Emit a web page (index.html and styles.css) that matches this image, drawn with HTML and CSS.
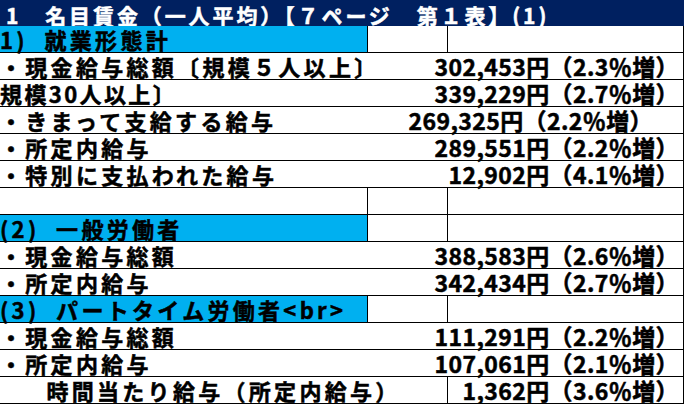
FILE: index.html
```html
<!DOCTYPE html>
<html lang="ja">
<head>
<meta charset="utf-8">
<title>名目賃金</title>
<link rel="stylesheet" href="styles.css">
</head>
<body>
<div class="sheet">
  <div class="title"><span class="title-text">1　名目賃金（一人平均）【７ページ　第１表】(1)</span></div>

  <div class="row grid3">
    <div class="cell c1 fill"><span class="label">1)  就業形態計</span></div>
    <div class="cell c2"></div>
    <div class="cell c3"></div>
  </div>
  <div class="row item">
    <span class="label">・現金給与総額〔規模５人以上〕</span>
    <span class="val">302,453円（2.3％増）</span>
  </div>
  <div class="row item">
    <span class="label tight">規模30人以上〕</span>
    <span class="val">339,229円（2.7％増）</span>
  </div>
  <div class="row item">
    <span class="label">・きまって支給する給与</span>
    <span class="val shift">269,325円（2.2％増）</span>
  </div>
  <div class="row item">
    <span class="label">・所定内給与</span>
    <span class="val">289,551円（2.2％増）</span>
  </div>
  <div class="row item">
    <span class="label">・特別に支払われた給与</span>
    <span class="val">12,902円（4.1％増）</span>
  </div>
  <div class="row grid3">
    <div class="cell c1"></div>
    <div class="cell c2"></div>
    <div class="cell c3"></div>
  </div>
  <div class="row grid3">
    <div class="cell c1 fill"><span class="label">(2)  一般労働者</span></div>
    <div class="cell c2"></div>
    <div class="cell c3"></div>
  </div>
  <div class="row item">
    <span class="label">・現金給与総額</span>
    <span class="val">388,583円（2.6％増）</span>
  </div>
  <div class="row item">
    <span class="label">・所定内給与</span>
    <span class="val">342,434円（2.7％増）</span>
  </div>
  <div class="row grid3">
    <div class="cell c1 fill"><span class="label">(3)  パートタイム労働者&lt;br&gt;</span></div>
    <div class="cell c2"></div>
    <div class="cell c3"></div>
  </div>
  <div class="row item">
    <span class="label">・現金給与総額</span>
    <span class="val">111,291円（2.2％増）</span>
  </div>
  <div class="row item">
    <span class="label">・所定内給与</span>
    <span class="val">107,061円（2.1％増）</span>
  </div>
  <div class="row grid2">
    <div class="cell merged"><span class="label">時間当たり給与（所定内給与）</span></div>
    <div class="cell c3 right"><span class="val">1,362円（3.6％増）</span></div>
  </div>
</div>
</body>
</html>
```

FILE: styles.css
```css
html, body {
  margin: 0;
  padding: 0;
  background: #ffffff;
}

.sheet {
  width: 684px;
  font-family: "Noto Sans CJK JP", "Noto Sans", sans-serif;
  font-weight: 700;
  color: #000000;
  -webkit-text-stroke: 0.5px currentColor;
}

.title {
  height: 26px;
  box-sizing: border-box;
  background: #002060;
  color: #ffffff;
  padding-left: 6px;
  display: flex;
  align-items: flex-start;
}

.title-text {
  font-size: 21px;
  letter-spacing: 2.9px;
  line-height: 30px;
  white-space: pre;
}

.row {
  height: 27px;
  box-sizing: border-box;
  border-bottom: 1px solid #000000;
  border-right: 1px solid #000000;
}

.item {
  display: flex;
  align-items: flex-end;
  justify-content: space-between;
}

.grid3 {
  display: grid;
  grid-template-columns: 367px 80px 1fr;
}

.grid2 {
  display: grid;
  grid-template-columns: 447px 1fr;
}

.cell {
  display: flex;
  align-items: flex-end;
  min-width: 0;
}

.c2,
.c3 {
  border-left: 1px solid #000000;
}

.fill {
  background: #00b0f0;
}

.merged {
  justify-content: center;
}

.right {
  justify-content: flex-end;
}

.label {
  font-size: 22px;
  line-height: 26px;
  letter-spacing: 3.3px;
  white-space: pre;
}

.label.tight {
  letter-spacing: 2.4px;
}

.val {
  font-size: 23px;
  line-height: 26px;
  letter-spacing: 0.4px;
  white-space: pre;
  padding-right: 4px;
}

.val.shift {
  padding-right: 30px;
}
```
